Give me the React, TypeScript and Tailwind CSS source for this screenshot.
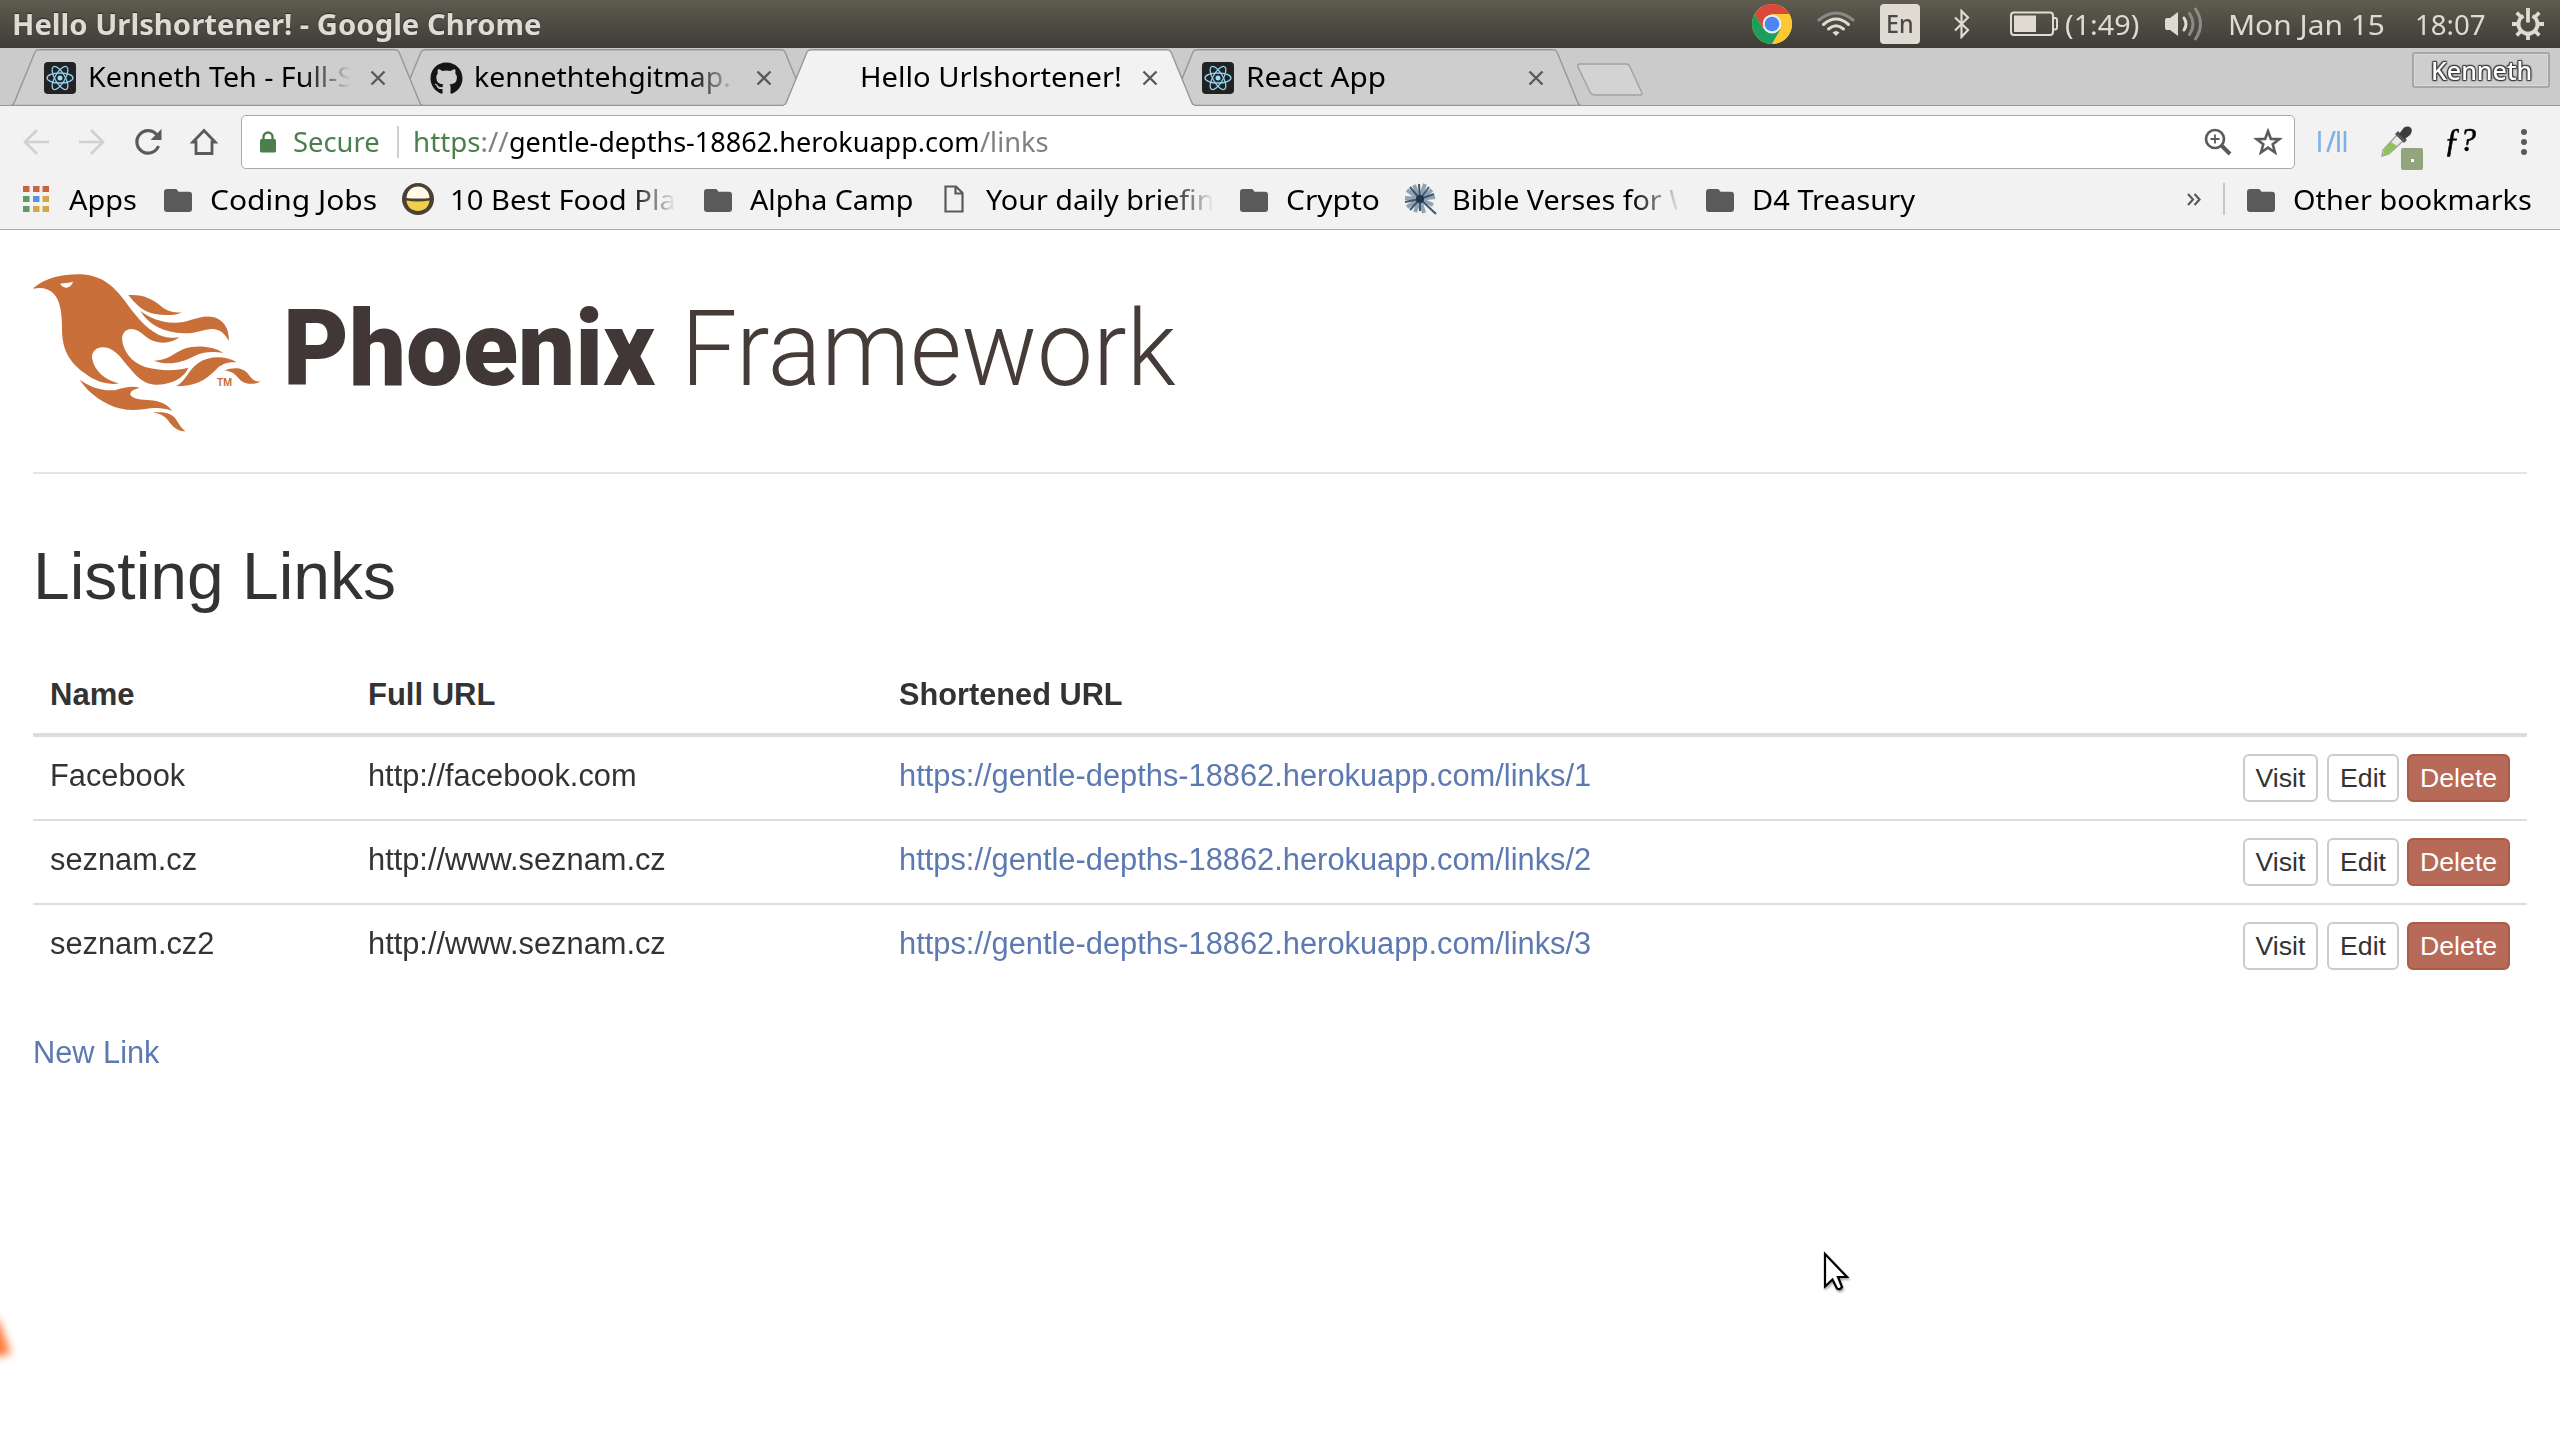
import { useLayoutEffect, useRef, useState, type ReactNode } from "react";
import { FaGithub } from "react-icons/fa";

/** One line of text set to an exact measure. */
function Fit({ w, className = "", children }: { w: number; className?: string; children: ReactNode }) {
  const inner = useRef<HTMLSpanElement>(null);
  const [scale, setScale] = useState(1);
  useLayoutEffect(() => {
    if (inner.current) setScale(w / inner.current.offsetWidth);
  }, [w]);
  return (
    <span className={`inline-block shrink-0 whitespace-pre ${className}`} style={{ width: w }}>
      <span ref={inner} className="inline-block origin-left" style={{ transform: `scaleX(${scale})` }}>
        {children}
      </span>
    </span>
  );
}

const ReactLogo = () => (
  <svg viewBox="0 0 32 32" className="h-8 w-8 shrink-0">
    <rect width="32" height="32" rx="4" fill="#222" />
    <g fill="none" stroke="#8fd3f0" strokeWidth="1.3">
      <ellipse cx="16" cy="16" rx="13" ry="5" />
      <ellipse cx="16" cy="16" rx="13" ry="5" transform="rotate(60 16 16)" />
      <ellipse cx="16" cy="16" rx="13" ry="5" transform="rotate(120 16 16)" />
    </g>
    <circle cx="16" cy="16" r="2.5" fill="#9bdcf7" />
  </svg>
);

const Folder = ({ className = "" }: { className?: string }) => (
  <svg viewBox="0 0 28 23" className={`h-[23px] w-7 shrink-0 ${className}`}>
    <path d="M3 0h8.5q1 0 1.6.8L14.500 2.700H25q3 0 3 3V20q0 3-3 3H3q-3 0-3-3V3q0-3 3-3z" fill="#5a5a5a" />
  </svg>
);

function Tab({ title, w, icon, active = false, fade = false, className }: { title: string; w: number; icon?: ReactNode; active?: boolean; fade?: boolean; className: string }) {
  return (
    <div className={`relative flex h-[57px] w-[412px] shrink-0 items-center pl-[33px] ${className}`}>
      <svg viewBox="0 0 412 57" className="absolute inset-0 h-[57px] w-[412px]">
        <path
          d="M0 56.500Q2.500 56 3.500 53L24 3Q25 .8 28 .8H384Q387 .8 388 3L408.500 53Q409.500 56 412 56.500"
          fill={active ? "#f2f2f2" : "#cecece"}
          stroke="#979797"
          strokeWidth="1.400"
        />
        {active ? <path d="M1 57V56H411V57z" fill="#f2f2f2" /> : <path d="M0 56.400H412" stroke="#979797" strokeWidth="1.200" />}
      </svg>
      <div className="relative flex items-center">
        <span className="h-8 w-8">{icon}</span>
        <span className={`-mt-[3px] ml-3 w-[276px] leading-9 ${fade ? "[mask-image:linear-gradient(to_right,#000_78%,transparent_95%)]" : ""}`}>
          <Fit w={w}>{title}</Fit>
        </span>
        <svg viewBox="0 0 16 16" className="ml-[6px] h-4 w-4">
          <path d="M1.500 1.500l13 13M14.500 1.500l-13 13" stroke="#5a5a5a" strokeWidth="2.400" />
        </svg>
      </div>
    </div>
  );
}

function SystemBar() {
  return (
    <div className="flex h-12 items-center bg-linear-to-b from-[#5f5c4f] to-[#3d3c38] pl-3 text-[28px] text-[#dfdbd2]">
      <Fit w={530} className="font-bold [text-shadow:0_-1px_1px_#2b2a27]">Hello Urlshortener! - Google Chrome</Fit>
      <svg viewBox="0 0 42 42" className="ml-[1209px] h-[42px] w-[42px]">
        <circle cx="21" cy="21" r="20" fill="#fcc934" />
        <path d="M21 11H38.300A20 20 0 0 0 3.700 11L12.400 26z" fill="#d9483b" />
        <path d="M3.700 11A20 20 0 0 0 21 41L29.700 26L21 21L12.400 26z" fill="#1a9f5c" />
        <path d="M21 41A20 20 0 0 0 38.300 11H21L29.700 26z" fill="#fcc934" />
        <circle cx="21" cy="21" r="9.400" fill="#e9eef5" />
        <circle cx="21" cy="21" r="7.300" fill="#4b87ef" />
      </svg>
      <svg viewBox="0 0 38 26" className="ml-[24px] h-[26px] w-[38px]" fill="none" strokeWidth="3" strokeLinecap="round">
        <path d="M2 9Q19-5 36 9" stroke="#8d8a83" />
        <path d="M6.500 13.500Q19 2.500 31.500 13.500" stroke="#dfdbd2" />
        <path d="M11.500 18Q19 11.500 26.500 18" stroke="#dfdbd2" />
        <path d="M15.500 21.500Q19 18.500 22.500 21.500L19 25z" fill="#dfdbd2" stroke="none" />
      </svg>
      <div className="ml-[25px] flex h-10 w-10 items-center justify-center rounded bg-[#dfdbd2] text-[25px] text-[#4a4945]">
        <Fit w={28} className="font-medium">En</Fit>
      </div>
      <svg viewBox="0 0 16 30" className="ml-[34px] h-[30px] w-4" fill="none" stroke="#dfdbd2" strokeWidth="2.200">
        <path d="M1 8.500L14 21L7.500 28V2L14 8.500L1 21.500" />
      </svg>
      <svg viewBox="0 0 48 26" className="ml-[40px] h-[26px] w-12">
        <rect x="1" y="1.500" width="42" height="22.500" rx="3" fill="none" stroke="#dfdbd2" strokeWidth="2" />
        <rect x="4" y="4.500" width="22" height="16.500" fill="#dfdbd2" />
        <path d="M43.500 7H45q2 0 2 2v7.500q0 2-2 2h-1.500" fill="none" stroke="#dfdbd2" strokeWidth="2" />
      </svg>
      <Fit w={74} className="-mt-px ml-[7px]">(1:49)</Fit>
      <svg viewBox="0 0 40 36" className="ml-[25px] h-9 w-10" fill="none" strokeWidth="3" strokeLinecap="round">
        <path d="M1 14Q1 12 3 12H6L14 6V30L6 24H3Q1 24 1 22z" fill="#dfdbd2" />
        <path d="M20 12Q24 18 20 24" stroke="#dfdbd2" />
        <path d="M25.500 7.500Q32.500 18 25.500 28.500" stroke="#8d8a83" />
        <path d="M31.500 3Q41.500 18 31.500 33" stroke="#8d8a83" />
      </svg>
      <Fit w={157} className="-mt-px ml-[24px]">Mon Jan 15</Fit>
      <Fit w={71} className="-mt-px ml-[30px]">18:07</Fit>
      <svg viewBox="0 0 32 32" className="ml-[26px] h-8 w-8" fill="none" stroke="#dfdbd2" strokeWidth="3.800">
        <path d="M11.500 7.800A9.500 9.500 0 1 0 20.500 7.800" />
        <path d="M16 0V14.500M16 26v6M0 16H6M26 16h6M4.700 4.700l4.300 4.300M27.300 4.700L23 9M4.700 27.300L9 23M27.300 27.300L23 23" />
      </svg>
    </div>
  );
}

function TabStrip() {
  return (
    <div className="flex h-[58px] items-start bg-[#cbcbcb] pt-px pl-[11px] text-[28px] text-black shadow-[inset_0_-1px_0_#979797]">
      <Tab className="z-30" icon={<ReactLogo />} title="Kenneth Teh - Full-S" w={265} fade />
      <Tab className="z-20 -ml-[26px]" icon={<FaGithub size={33} color="#161514" />} title="kennethtehgitmap." w={257} fade />
      <Tab className="z-40 -ml-[26px]" title="Hello Urlshortener!" w={262} active />
      <Tab className="z-10 -ml-[26px]" icon={<ReactLogo />} title="React App" w={140} />
      <svg viewBox="0 0 68 34" className="-ml-[5px] mt-[14px] h-[34px] w-[68px]">
        <path d="M4 1H50Q53 1 54 4L65.500 29Q67 32 64 32H19Q15.500 32 14 29L2 4Q.8 1 4 1z" fill="#d3d3d3" stroke="#a3a3a3" strokeWidth="1.500" />
      </svg>
      <div className="mt-[3px] mr-[10px] ml-auto flex h-9 w-[138px] items-center justify-center rounded-[3px] border-2 border-[#a6a6a6] bg-[#cecece] text-[26px] text-white shadow-[inset_0_0_0_1px_#dadada]">
        <Fit w={101} className="font-medium [text-shadow:0_0_2px_#333,0_0_2px_#333,1px_1px_1px_#444,-1px_-1px_1px_#444,1px_-1px_1px_#444,-1px_1px_1px_#444]">Kenneth</Fit>
      </div>
    </div>
  );
}

function Toolbar() {
  return (
    <div className="flex h-[72px] items-center pl-[22px] text-[28px]">
      <svg viewBox="0 0 28 26" className="h-[26px] w-7" fill="none" stroke="#d0d0d0" strokeWidth="2.700">
        <path d="M15 1L3 13L15 25M3 13H27" />
      </svg>
      <svg viewBox="0 0 28 26" className="ml-[28px] h-[26px] w-7" fill="none" stroke="#d0d0d0" strokeWidth="2.700">
        <path d="M13 1L25 13L13 25M25 13H1" />
      </svg>
      <svg viewBox="0 0 28 28" className="ml-[28px] h-7 w-7">
        <path d="M24.500 18A11.200 11.200 0 1 1 22.500 6.500" fill="none" stroke="#5a5a5a" strokeWidth="3.200" />
        <path d="M27.500 1V12H16.500z" fill="#5a5a5a" />
      </svg>
      <svg viewBox="0 0 28 28" className="ml-[28px] h-7 w-7">
        <path d="M6 14V25.500H22V14H25L14 2.500L3 14z" fill="none" stroke="#5a5a5a" strokeWidth="2.800" />
      </svg>
      <div className="ml-[23px] flex h-[54px] w-[2054px] items-center rounded-[5px] border-[1.500px] border-[#a9a9a9] bg-white pl-[17px] leading-[48px]">
        <svg viewBox="0 0 18 22" className="h-[22px] w-[18px]">
          <rect y="8" x="1" width="16" height="13.500" rx="1.500" fill="#4b7f4b" />
          <path d="M4.500 9V6a4.500 4.500 0 0 1 9 0V9" fill="none" stroke="#4b7f4b" strokeWidth="2.400" />
        </svg>
        <Fit w={87} className="ml-[16px] -mt-0.5 text-[#4b7f4b]">Secure</Fit>
        <span className="ml-[17px] h-8 w-0.5 bg-[#d0d0d0]" />
        <Fit w={96} className="ml-[14px] -mt-0.5 text-[#808080]">
          <span className="text-[#4b7f4b]">https</span>://
        </Fit>
        <Fit w={471} className="-mt-0.5 text-black">gentle-depths-18862.herokuapp.com</Fit>
        <Fit w={69} className="-mt-0.5 text-[#808080]">/links</Fit>
        <svg viewBox="0 0 28 28" className="mr-[21px] ml-auto h-7 w-7" fill="none" stroke="#5a5a5a">
          <circle cx="11" cy="11" r="9" strokeWidth="2.700" />
          <path d="M17.500 17.500L26 26" strokeWidth="4" />
          <path d="M11 6.500v9M6.500 11h9" strokeWidth="1.800" />
        </svg>
        <svg viewBox="0 0 30 28" className="mr-[11px] h-7 w-[30px]">
          <path d="M15 3.200L17.900 10.900L26.300 11.200L19.700 16.300L22 24.500L15 19.700L8 24.500L10.300 16.300L3.700 11.200L12.100 10.900z" fill="none" stroke="#5a5a5a" strokeWidth="2.600" />
        </svg>
      </div>
      <svg viewBox="0 0 30 22" className="ml-[22px] h-[22px] w-[30px]" stroke="#7fb0e6" strokeWidth="2.600">
        <path d="M2.500 0V21M10.500 21L17.500 0M21.500 0V21M28 0V21" />
      </svg>
      <div className="relative ml-[33px] h-8 w-8">
        <svg viewBox="0 0 32 32" className="h-8 w-8">
          <path d="M17 9L23 15L9 28L2 30L3 24z" fill="#e8ece6" stroke="#9a9f98" strokeWidth="1.300" />
          <path d="M11 16L17 20L8 28L3 29.500L4 24z" fill="#8fc455" />
          <path d="M15 8L18 5L27 14L24 17z" fill="#555" />
          <path d="M19 8L24 1.500Q28-.5 31 2Q33 5 30 9L25 13z" fill="#3c3c3c" />
        </svg>
        <span className="absolute top-[22px] left-[21px] flex h-[22px] w-[22px] items-center justify-center rounded-[2px] bg-[#93a57c]">
          <span className="mt-0.5 h-[3px] w-[3px] bg-white" />
        </span>
      </div>
      <Fit w={32} className="-mt-1 ml-[32px] font-['Liberation_Serif'] text-[34px] leading-10 text-black italic [-webkit-text-stroke:0.6px_#000]">ƒ?</Fit>
      <svg viewBox="0 0 6 28" className="ml-[45px] h-7 w-1.5" fill="#5a5a5a">
        <circle cx="3" cy="4" r="3" />
        <circle cx="3" cy="14" r="3" />
        <circle cx="3" cy="24" r="3" />
      </svg>
    </div>
  );
}

const fadeOut = "[mask-image:linear-gradient(to_right,#000_80%,transparent_100%)]";

function Bookmarks() {
  return (
    <div className="flex h-[52px] items-center border-b border-[#a9a9a9] pb-[9px] pl-[23px] text-[28px] leading-[42px] text-black">
      <svg viewBox="0 0 26 26" className="h-[26px] w-[26px]">
        <path d="M0 0h6.500v6H0zM10 0h6.500v6H10zM19.500 0H26v6h-6.500z" fill="#cd6242" />
        <path d="M0 10h6.500v6H0zM0 20h6.500v6H0z" fill="#5f9a62" />
        <path d="M10 10h6.500v6H10z" fill="#5c8be8" />
        <path d="M19.500 10H26v6h-6.500zM10 20h6.500v6H10zM19.500 20H26v6h-6.500z" fill="#d5a740" />
      </svg>
      <Fit w={68} className="ml-[20px]">Apps</Fit>
      <Folder className="ml-[27px] mt-0.5" />
      <Fit w={167} className="ml-[18px]">Coding Jobs</Fit>
      <svg viewBox="0 0 32 32" className="ml-[25px] h-8 w-8">
        <circle cx="16" cy="16" r="16" fill="#4a4034" />
        <path d="M4.500 15.500C4.500-.5 27.500-.5 27.500 15.500z" fill="#fffbe6" />
        <path d="M4.500 17.500Q16 19.500 27.500 17.500C26.500 31.500 5.500 31.500 4.500 17.500z" fill="#f0cf4a" />
        <path d="M4 15.500Q16 19 28 15.500" fill="none" stroke="#4a4034" strokeWidth="1.300" />
      </svg>
      <Fit w={226} className={`ml-[16px] mr-[2px] ${fadeOut}`}>10 Best Food Pla</Fit>
      <Folder className="ml-[26px] mt-0.5" />
      <Fit w={163} className="ml-[18px]">Alpha Camp</Fit>
      <svg viewBox="0 0 20 28" className="ml-[31px] h-7 w-5" fill="none" stroke="#5a5a5a" strokeWidth="2.200">
        <path d="M1.500 1.500H12L18.500 8V26.500H1.500zM11.500 1.500V8.500H18.500" />
      </svg>
      <Fit w={228} className={`ml-[22px] ${fadeOut}`}>Your daily briefin</Fit>
      <Folder className="ml-[26px] mt-0.5" />
      <Fit w={94} className="ml-[18px]">Crypto</Fit>
      <svg viewBox="0 0 33 32" className="ml-[24px] h-8 w-[33px]" fill="none">
        <path d="M16 16L3 7M16 16L10 2M16 16L21 1M16 16L28 7M16 16L31 14M16 16L29 22M16 16L20 30M16 16L11 29M16 16L3 24M16 16L1 15" stroke="#8fa3b2" strokeWidth="4" />
        <path d="M16 16L6 4M16 16L15 1M16 16L25 4M16 16L30 11M16 16L32 31M16 16L16 28M16 16L6 27M16 16L1 19" stroke="#40566a" strokeWidth="2" />
        <circle cx="16" cy="16" r="4" fill="#21364a" />
      </svg>
      <span className="ml-[15px] w-[225px] [mask-image:linear-gradient(to_right,#000_80%,transparent_102%)]">
        <Fit w={244}>Bible Verses for W</Fit>
      </span>
      <Folder className="ml-[29px] mt-0.5" />
      <Fit w={163} className="ml-[18px]">D4 Treasury</Fit>
      <svg viewBox="0 0 14 13" className="ml-[272px] h-[13px] w-[14px]" fill="none" stroke="#5a5a5a" strokeWidth="2.200">
        <path d="M1 1L6 6.500L1 12M7.500 1L12.500 6.500L7.500 12" />
      </svg>
      <span className="ml-[22px] h-8 w-[1.500px] bg-[#c6c6c6]" />
      <Folder className="ml-[22px] mt-0.5" />
      <Fit w={239} className="ml-[18px]">Other bookmarks</Fit>
    </div>
  );
}

const PhoenixBird = () => (
  <div className="relative mt-px h-[158px] w-[229px]">
    <svg viewBox="80 70 560 472" preserveAspectRatio="none" className="h-[158px] w-[229px]" fill="#c9703a">
      <path d="M81 112C110 82 150 71 190 71C245 71 275 103 303 148C325 185 352 231 388 252C403 260 420 261 438 260C420 275 395 281 370 268C350 255 345 237 320 234C305 234 297 250 298 265C300 300 320 332 352 347C390 360 430 360 460 350C450 378 425 398 385 401C345 400 330 370 305 335C290 312 275 288 248 289C230 290 222 310 225 325C230 358 255 387 290 397C270 402 235 395 205 365C165 330 152 290 151 240C151 190 148 150 130 128C118 113 100 108 81 114Z" />
      <path d="M146 99C158 97 168 96 178 93C175 104 168 111 160 111C152 109 150 104 146 99Z" fill="#fff" />
      <path d="M313 133C350 130 372 145 392 165C408 182 425 187 445 184C430 194 405 195 375 189C345 180 330 158 313 133Z" />
      <path d="M342 180C365 200 390 215 425 216C460 216 475 198 508 197C540 198 560 225 559 270C550 250 540 236 520 234C495 234 480 248 450 247C400 245 365 225 342 180Z" />
      <path d="M376 329C410 328 425 305 450 293C480 282 520 285 546 306C515 300 495 303 475 315C445 335 410 345 376 329Z" />
      <path d="M430 405C455 390 460 355 485 335C510 315 550 312 578 334C555 332 540 340 528 355C500 390 475 405 430 405Z" />
      <path d="M549 359C570 347 595 350 607 370C618 388 625 392 637 391C620 402 600 400 588 388C575 372 570 360 549 359Z" />
      <path d="M194 385C215 405 245 420 280 417C305 410 320 403 341 410C325 415 315 422 319 433C330 448 355 445 375 448C400 453 412 465 420 479C395 467 375 470 350 474C320 480 290 475 265 460C230 438 210 415 194 385Z" />
      <path d="M372 484C400 480 420 485 430 505C438 520 443 533 453 540C435 540 425 530 415 515C403 495 395 488 372 484Z" />
    </svg>
    <span className="absolute top-[103px] left-[184px] font-['Roboto'] text-[10px] leading-[12px] font-bold text-[#c9703a]">
      <Fit w={15}>TM</Fit>
    </span>
  </div>
);

const links = [
  { id: 1, name: "Facebook", nameW: 135, url: "http://facebook.com", urlW: 269 },
  { id: 2, name: "seznam.cz", nameW: 147, url: "http://www.seznam.cz", urlW: 298 },
  { id: 3, name: "seznam.cz2", nameW: 164, url: "http://www.seznam.cz", urlW: 298 },
];

const btn = "flex h-12 items-center justify-center rounded-[6px] border-2 text-[26.700px]";

export default function App() {
  return (
    <div className="relative h-[1440px] w-[2560px] overflow-hidden bg-white font-['Noto_Sans',sans-serif]">
      <SystemBar />
      <TabStrip />
      <div className="bg-[#f2f2f2]">
        <Toolbar />
        <Bookmarks />
      </div>
      <main className="px-[33px] font-['Liberation_Sans',sans-serif] text-[31px] text-[#333]">
        <header className="flex h-[244px] items-start border-b-2 border-[#e5e5e5] pt-[43px]">
          <PhoenixBird />
          <Fit w={372} className="mt-[17px] ml-[21px] font-['Roboto'] text-[105px] leading-[120px] font-black text-[#413736]">Phoenix</Fit>
          <Fit w={495} className="mt-[17px] ml-[26px] font-['Roboto'] text-[105px] leading-[120px] font-light text-[#453c3a]">Framework</Fit>
        </header>
        <h2 className="mt-[62px] text-[66.500px] leading-[80px]">
          <Fit w={363}>Listing Links</Fit>
        </h2>
        <div className="mt-[40px]">
          <div className="flex h-[81px] border-b-4 border-[#ddd] pt-[17px] pl-[17px] leading-[44px] font-bold">
            <Fit w={84} className="mr-[234px]">Name</Fit>
            <Fit w={127} className="mr-[404px]">Full URL</Fit>
            <Fit w={224}>Shortened URL</Fit>
          </div>
          {links.map((l) => (
            <div key={l.id} className="flex h-[84px] border-b-2 border-[#ddd] pt-[17px] pr-[17px] pl-[17px] leading-[44px] last:border-transparent">
              <div className="w-[318px]"><Fit w={l.nameW}>{l.name}</Fit></div>
              <div className="w-[531px]"><Fit w={l.urlW}>{l.url}</Fit></div>
              <Fit w={692} className="text-[#5c79b1]">{`https://gentle-depths-18862.herokuapp.com/links/${l.id}`}</Fit>
              <div className="ml-auto flex">
                <button className={`${btn} w-[75px] border-[#ccc] bg-white`}><Fit w={50}>Visit</Fit></button>
                <button className={`${btn} ml-[9px] w-[72px] border-[#ccc] bg-white`}><Fit w={46}>Edit</Fit></button>
                <button className={`${btn} ml-[8px] w-[103px] border-[#ab5d49] bg-[#b66a57] text-white`}><Fit w={77}>Delete</Fit></button>
              </div>
            </div>
          ))}
        </div>
        <div className="mt-[42px] leading-[44px] text-[#5c79b1]">
          <Fit w={127}>New Link</Fit>
        </div>
      </main>
      <svg viewBox="0 0 30 44" className="absolute top-[1250px] left-[1822px] h-11 w-[30px] drop-shadow-[1px_2px_1px_rgba(0,0,0,0.35)]">
        <path d="M3 4V36.500L10.500 29.500L15 38.500Q17.500 40.500 20 37L16 27H25z" fill="#fff" stroke="#000" strokeWidth="2.200" />
      </svg>
      <svg viewBox="0 0 20 60" className="absolute top-[1310px] left-0 h-[60px] w-5 overflow-visible blur-[4px]">
        <path d="M-10 0L1 16L11 44L-10 48z" fill="#ff7a3c" />
      </svg>
    </div>
  );
}
